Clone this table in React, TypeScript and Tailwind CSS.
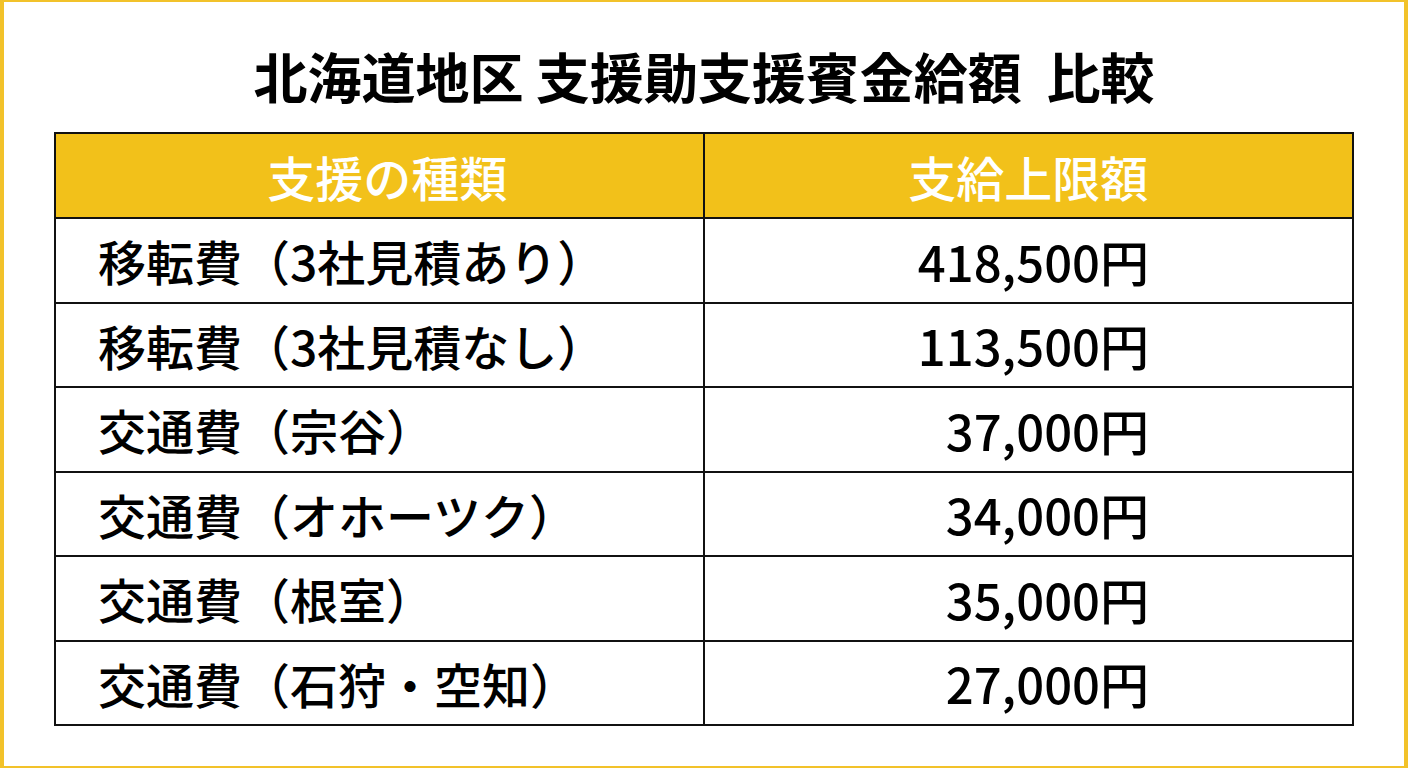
import React from "react";

interface Row {
	label: string;
	amount: string;
}

const rows: Row[] = [
	{ label: "移転費（3社見積あり）", amount: "418,500円" },
	{ label: "移転費（3社見積なし）", amount: "113,500円" },
	{ label: "交通費（宗谷）", amount: "37,000円" },
	{ label: "交通費（オホーツク）", amount: "34,000円" },
	{ label: "交通費（根室）", amount: "35,000円" },
	{ label: "交通費（石狩・空知）", amount: "27,000円" }
];

const font = "font-['Noto_Sans_CJK_JP','Noto_Sans',sans-serif]";

export default function App() {
	return (
		<div
			className={`w-[1408px] h-[768px] bg-white border-x-4 border-y-2 border-[#f2c22a] flex flex-col items-center ${font}`}
		>
			<h1 className="mt-[44px] h-[86px] text-[54px] leading-[60px] font-bold text-black whitespace-pre">
				北海道地区 支援勛支援賓金給額  比較
			</h1>

			<table className="w-[1300px] border-collapse border-2 border-[#111]">
				<thead>
					<tr className="bg-[#f2c11a] h-[85px]">
						<th className="w-[650px] border-2 border-[#111] text-white text-[48px] font-medium leading-none pl-[16px]">
							支援の種類
						</th>
						<th className="w-[650px] border-2 border-[#111] text-white text-[48px] font-medium leading-none">
							支給上限額
						</th>
					</tr>
				</thead>
				<tbody>
					{rows.map((r) => (
						<tr key={r.label} className="h-[84.5px]">
							<td className="border-2 border-[#111] pl-[42px] text-[48px] font-medium leading-none text-black">
								{r.label}
							</td>
							<td className="border-2 border-[#111] pr-[203px] text-right text-[49px] font-medium leading-none text-black">
								{r.amount}
							</td>
						</tr>
					))}
				</tbody>
			</table>
		</div>
	);
}
